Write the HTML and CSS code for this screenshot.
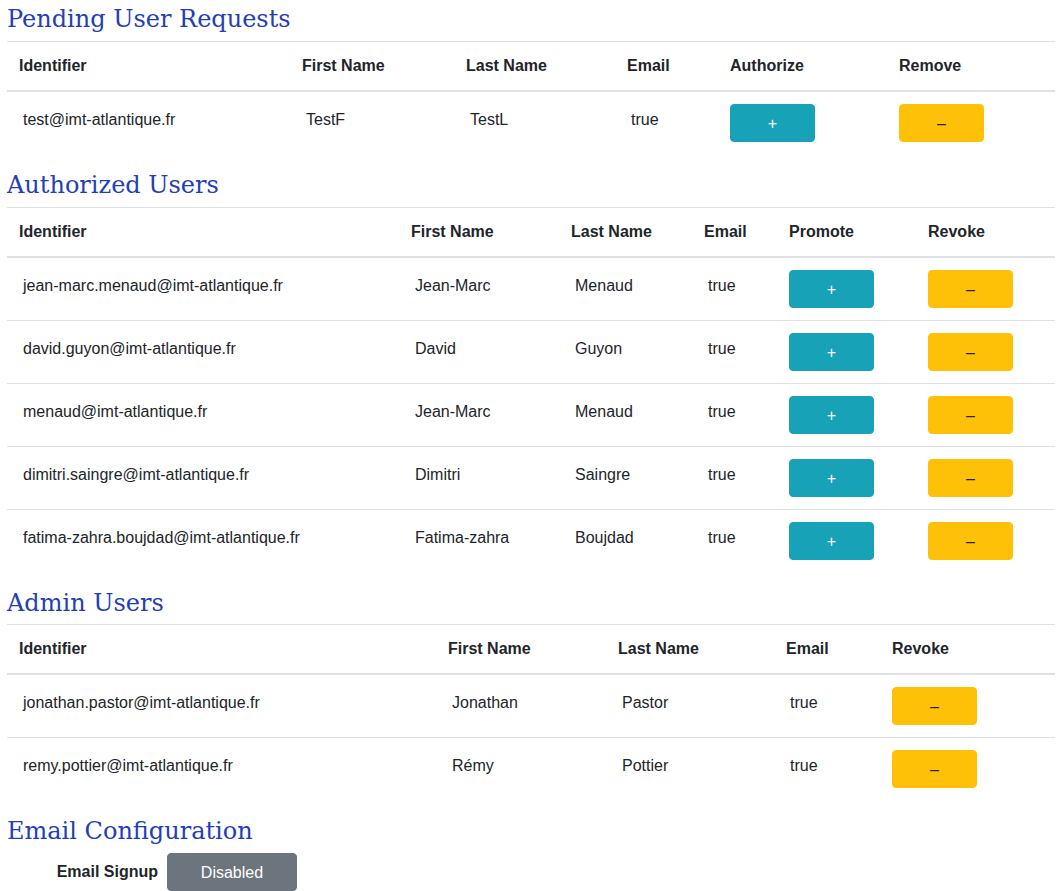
FILE: index.html
```html
<!DOCTYPE html>
<html>
<head>
<meta charset="utf-8">
<link rel="stylesheet" href="styles.css">
</head>
<body>
<div class="page">
  <h2 class="section-title">Pending User Requests</h2>
  <table class="users pending">
    <thead>
      <tr><th>Identifier</th><th>First Name</th><th>Last Name</th><th>Email</th><th>Authorize</th><th>Remove</th></tr>
    </thead>
    <tbody>
      <tr><td><span class="cell">test@imt-atlantique.fr</span></td><td><span class="cell">TestF</span></td><td><span class="cell">TestL</span></td><td><span class="cell">true</span></td><td><button class="btn btn-info">+</button></td><td><button class="btn btn-warning">–</button></td></tr>
    </tbody>
  </table>

  <h2 class="section-title">Authorized Users</h2>
  <table class="users authorized">
    <thead>
      <tr><th>Identifier</th><th>First Name</th><th>Last Name</th><th>Email</th><th>Promote</th><th>Revoke</th></tr>
    </thead>
    <tbody>
      <tr><td><span class="cell">jean-marc.menaud@imt-atlantique.fr</span></td><td><span class="cell">Jean-Marc</span></td><td><span class="cell">Menaud</span></td><td><span class="cell">true</span></td><td><button class="btn btn-info">+</button></td><td><button class="btn btn-warning">–</button></td></tr>
      <tr><td><span class="cell">david.guyon@imt-atlantique.fr</span></td><td><span class="cell">David</span></td><td><span class="cell">Guyon</span></td><td><span class="cell">true</span></td><td><button class="btn btn-info">+</button></td><td><button class="btn btn-warning">–</button></td></tr>
      <tr><td><span class="cell">menaud@imt-atlantique.fr</span></td><td><span class="cell">Jean-Marc</span></td><td><span class="cell">Menaud</span></td><td><span class="cell">true</span></td><td><button class="btn btn-info">+</button></td><td><button class="btn btn-warning">–</button></td></tr>
      <tr><td><span class="cell">dimitri.saingre@imt-atlantique.fr</span></td><td><span class="cell">Dimitri</span></td><td><span class="cell">Saingre</span></td><td><span class="cell">true</span></td><td><button class="btn btn-info">+</button></td><td><button class="btn btn-warning">–</button></td></tr>
      <tr><td><span class="cell">fatima-zahra.boujdad@imt-atlantique.fr</span></td><td><span class="cell">Fatima-zahra</span></td><td><span class="cell">Boujdad</span></td><td><span class="cell">true</span></td><td><button class="btn btn-info">+</button></td><td><button class="btn btn-warning">–</button></td></tr>
    </tbody>
  </table>

  <h2 class="section-title">Admin Users</h2>
  <table class="users admin">
    <thead>
      <tr><th>Identifier</th><th>First Name</th><th>Last Name</th><th>Email</th><th>Revoke</th></tr>
    </thead>
    <tbody>
      <tr><td><span class="cell">jonathan.pastor@imt-atlantique.fr</span></td><td><span class="cell">Jonathan</span></td><td><span class="cell">Pastor</span></td><td><span class="cell">true</span></td><td><button class="btn btn-warning">–</button></td></tr>
      <tr><td><span class="cell">remy.pottier@imt-atlantique.fr</span></td><td><span class="cell">Rémy</span></td><td><span class="cell">Pottier</span></td><td><span class="cell">true</span></td><td><button class="btn btn-warning">–</button></td></tr>
    </tbody>
  </table>

  <h2 class="section-title">Email Configuration</h2>
  <div class="config-row">
    <label class="config-label">Email Signup</label>
    <button class="btn btn-secondary">Disabled</button>
  </div>
</div>
</body>
</html>
```
FILE: styles.css
```css
html, body {
  margin: 0;
  padding: 0;
  background: #fff;
}
body {
  font-family: "Liberation Sans", Arial, sans-serif;
  font-size: 16px;
  line-height: 24px;
  color: #212529;
}
.page {
  padding: 4px 7px 0 7px;
}
.section-title {
  font-family: "DejaVu Serif", serif;
  font-weight: normal;
  font-size: 24px;
  line-height: 1.2;
  color: #1f40b9;
  margin: 0 0 7px 0;
  padding-top: 1px;
}
.users {
  width: 100%;
  border-collapse: collapse;
  table-layout: fixed;
  margin-bottom: 16px;
}
.users th, .users td {
  text-align: left;
  vertical-align: top;
  padding: 12px;
  border-top: 1px solid #dee2e6;
}
.users th {
  font-weight: bold;
  border-bottom: 2px solid #dee2e6;
}
.users thead + tbody tr:first-child td {
  border-top: 0;
}
.cell {
  display: block;
  padding: 4px 4px 0 4px;
  white-space: nowrap;
}

.pending th:nth-child(1) { width: 259px; }
.pending th:nth-child(2) { width: 140px; }
.pending th:nth-child(3) { width: 137px; }
.pending th:nth-child(4) { width: 79px; }
.pending th:nth-child(5) { width: 145px; }
.pending th:nth-child(6) { width: 144px; }

.authorized th:nth-child(1) { width: 368px; }
.authorized th:nth-child(2) { width: 136px; }
.authorized th:nth-child(3) { width: 109px; }
.authorized th:nth-child(4) { width: 61px; }
.authorized th:nth-child(5) { width: 115px; }
.authorized th:nth-child(6) { width: 115px; }

.admin th:nth-child(1) { width: 405px; }
.admin th:nth-child(2) { width: 146px; }
.admin th:nth-child(3) { width: 144px; }
.admin th:nth-child(4) { width: 82px; }
.admin th:nth-child(5) { width: 151px; }

.btn {
  display: inline-block;
  box-sizing: border-box;
  height: 38px;
  width: 85px;
  padding: 7px 12px 5px 12px;
  font-family: "Liberation Sans", Arial, sans-serif;
  font-size: 16px;
  line-height: 24px;
  border: 1px solid transparent;
  border-radius: 4px;
  text-align: center;
  cursor: pointer;
}
.btn-info {
  background: #17a2b8;
  border-color: #17a2b8;
  color: #fff;
}
.btn-warning {
  background: #ffc107;
  border-color: #ffc107;
  color: #212529;
}
.btn-secondary {
  background: #6c757d;
  border-color: #6c757d;
  color: #fff;
  width: 130px;
}
.config-row {
  display: flex;
  align-items: center;
  gap: 9px;
}
.config-label {
  width: 151px;
  text-align: right;
  font-weight: bold;
}
```
